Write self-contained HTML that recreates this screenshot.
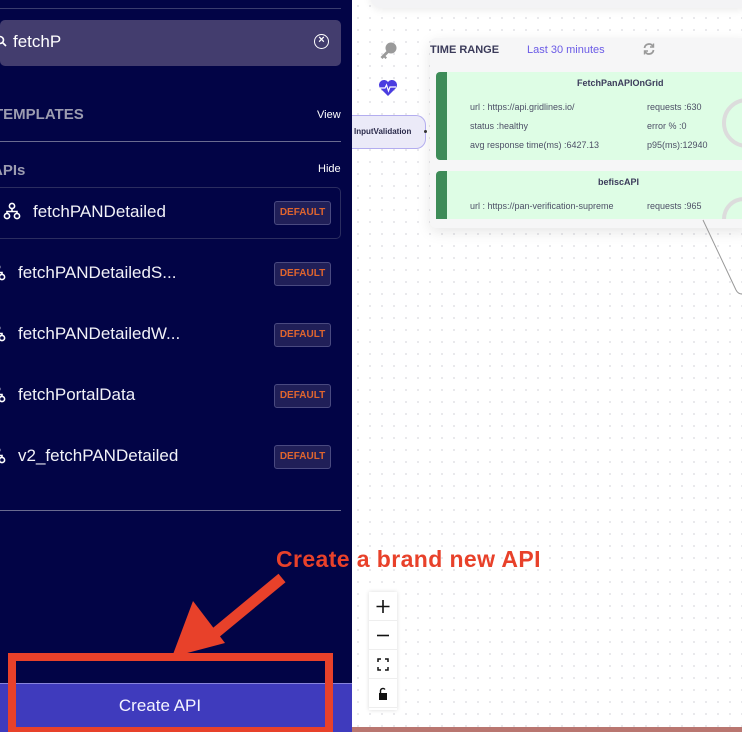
<!DOCTYPE html>
<html><head><style>
*{margin:0;padding:0;box-sizing:border-box}
body{width:742px;height:732px;overflow:hidden;position:relative;font-family:"Liberation Sans",sans-serif;background:#fff}
.sb{position:absolute;left:0;top:0;width:352px;height:732px;background:#020446;color:#fff}
.abs{position:absolute}
.canvas{position:absolute;left:352px;top:0;width:390px;height:732px;background-color:#fff;background-image:radial-gradient(#d6d6dc 0.7px,transparent 0.9px);background-size:12px 12px}
.badge{position:absolute;left:274px;width:57px;height:24px;border:1px solid #4a4a80;background:#201f58;border-radius:3px;color:#e0652e;font-size:10px;font-weight:bold;text-align:center;line-height:22px}
.item{position:absolute;font-size:17px;color:#f2f2f8}
.row{position:absolute;font-size:9px;color:#4d4f66}
.zb{position:absolute;left:369px;width:28px;height:29px;background:#fff;border-bottom:1px solid #eee}
</style></head><body>
<div class="canvas"></div>
<div class="abs" style="left:370px;top:-20px;width:380px;height:28px;background:#f3f3f5;border-radius:12px;box-shadow:0 2px 8px rgba(0,0,0,.08)"></div>
<svg class="abs" style="left:378px;top:41px" width="20" height="20" viewBox="0 0 20 20"><circle cx="13" cy="7" r="5.5" fill="#9a9a9a"/><path d="M9.5 9 L2.5 16 L4.5 18 L6 16.5 L7.5 18 L9 16.5 L7.5 15 L11.5 11Z" fill="#9a9a9a"/></svg>
<svg class="abs" style="left:378px;top:79px" width="20" height="18" viewBox="0 0 20 18"><path d="M10 17 L2 9 A4.5 4.5 0 0 1 10 3 A4.5 4.5 0 0 1 18 9Z" fill="#4b3de0"/><path d="M2 9 H7 L8.5 6 L10.5 12 L12 8 H18" stroke="#fff" stroke-width="1.2" fill="none"/></svg>
<div class="abs" style="left:430px;top:38px;width:320px;height:190px;background:#f6f6f7;box-shadow:0 4px 14px rgba(0,0,0,.1);border-radius:6px"></div>
<div class="abs" style="left:430px;top:44px;font-size:11px;font-weight:bold;color:#3b3b5a">TIME RANGE</div>
<div class="abs" style="left:527px;top:44px;font-size:11px;color:#6a5ae6">Last 30 minutes</div>
<svg class="abs" style="left:642px;top:42px" width="14" height="14" viewBox="0 0 14 14" fill="none" stroke="#9a9a9a" stroke-width="1.8"><path d="M2.5 6 A4.5 4.5 0 0 1 11 4.5 M11.5 8 A4.5 4.5 0 0 1 3 9.5"/><path d="M11.5 1.5 V5 H8 M2.5 12.5 V9 H6" stroke-width="1.4"/></svg>
<div class="abs" style="left:436px;top:72px;width:310px;height:88px;background:#defde5;border-left:11px solid #3d8c58;border-radius:4px 0 0 4px"></div>
<div class="abs" style="left:577px;top:78px;font-size:9px;font-weight:bold;color:#3b3b5a">FetchPanAPIOnGrid</div>
<div class="row" style="left:470px;top:102px">url : https://api.gridlines.io/</div>
<div class="row" style="left:470px;top:121px">status :healthy</div>
<div class="row" style="left:470px;top:140px">avg response time(ms) :6427.13</div>
<div class="row" style="left:647px;top:102px">requests :630</div>
<div class="row" style="left:647px;top:121px">error % :0</div>
<div class="row" style="left:647px;top:140px">p95(ms):12940</div>
<div class="abs" style="left:722px;top:98px;width:50px;height:50px;border:4px solid #dcdcdc;border-radius:50%"></div>
<div class="abs" style="left:436px;top:171px;width:310px;height:48px;background:#defde5;border-left:11px solid #3d8c58;border-radius:4px 0 0 0"></div>
<div class="abs" style="left:598px;top:177px;font-size:9px;font-weight:bold;color:#3b3b5a">befiscAPI</div>
<div class="row" style="left:470px;top:201px;width:160px;overflow:hidden;white-space:nowrap">url : https://pan-verification-supreme</div>
<div class="row" style="left:647px;top:201px">requests :965</div>
<div class="abs" style="left:722px;top:197px;width:50px;height:22px;border:4px solid #dcdcdc;border-bottom:none;border-radius:25px 25px 0 0"></div>
<svg class="abs" style="left:700px;top:218px" width="42" height="80"><path d="M3 2 L36 72 Q38 76 42 76" stroke="#999" fill="none"/></svg>
<div class="abs" style="left:352px;top:115px;width:74px;height:34px;background:#ebeaf8;border:1px solid #b3adef;border-left:none;border-radius:0 10px 10px 0;font-size:8px;font-weight:bold;color:#2a2a4a;line-height:32px;padding-left:2px">InputValidation</div>
<div class="abs" style="left:424px;top:130px;width:3px;height:3px;background:#333;border-radius:50%"></div>
<div class="abs" style="left:369px;top:592px;width:28px;height:118px;box-shadow:0 0 4px rgba(0,0,0,.15)"></div>
<div class="zb" style="top:592px"><svg width="28" height="29"><path d="M14 8 V21 M7.5 14.5 H20.5" stroke="#111" stroke-width="1.6"/></svg></div>
<div class="zb" style="top:621px"><svg width="28" height="29"><path d="M8 14.5 H20" stroke="#111" stroke-width="1.6"/></svg></div>
<div class="zb" style="top:650px"><svg width="28" height="29" fill="none" stroke="#111" stroke-width="1.5"><path d="M9 12 V9 H12 M16 9 H19 V12 M19 17 V20 H16 M12 20 H9 V17"/></svg></div>
<div class="zb" style="top:679px"><svg width="28" height="29"><rect x="10" y="14" width="8" height="7" fill="#111"/><path d="M11.5 14 V11.5 A2.5 2.5 0 0 1 16 10.5" stroke="#111" stroke-width="1.4" fill="none"/></svg></div>

<div class="sb">
<div class="abs" style="left:0;top:8px;width:341px;height:1px;background:#3a3c6e"></div>
<div class="abs" style="left:0;top:20px;width:341px;height:46px;background:#433d6e;border-radius:5px"></div>
<svg class="abs" style="left:-4px;top:35px" width="12" height="14" fill="none" stroke="#fff" stroke-width="1.6"><circle cx="4" cy="5" r="3.5"/><path d="M6.5 7.5 L10 11"/></svg>
<div class="abs" style="left:13px;top:32px;font-size:17px">fetchP</div>
<div class="abs" style="left:314px;top:34px;width:15px;height:15px;border:1.5px solid #fff;border-radius:50%;font-size:11px;font-weight:bold;text-align:center;line-height:11px">×</div>
<div class="abs" style="left:-6px;top:106px;font-size:15px;font-weight:bold;color:#9c9cb0">TEMPLATES</div>
<div class="abs" style="left:317px;top:109px;font-size:11px">View</div>
<div class="abs" style="left:0;top:141px;width:341px;height:1px;background:#6a6b90"></div>
<div class="abs" style="left:-8px;top:162px;font-size:15px;font-weight:bold;color:#9c9cb0">APIs</div>
<div class="abs" style="left:318px;top:163px;font-size:11px">Hide</div>
<div class="abs" style="left:-5px;top:187px;width:346px;height:52px;border:1px solid #2b2d60;border-radius:5px"></div>
<svg class="abs" style="left:3px;top:202px" width="18" height="18" viewBox="0 0 18 18" fill="none" stroke="#fff" stroke-width="1.6"><circle cx="9" cy="4" r="2.6"/><circle cx="4" cy="14" r="2.6"/><circle cx="14" cy="14" r="2.6"/><path d="M9 6.6 V9 M4 11.4 V9.5 H14 V11.4"/></svg>
<div class="item" style="left:33px;top:202px">fetchPANDetailed</div>
<div class="badge" style="top:201px">DEFAULT</div>
<svg class="abs" style="left:-12px;top:263px" width="18" height="18" viewBox="0 0 18 18" fill="none" stroke="#fff" stroke-width="1.6"><circle cx="9" cy="4" r="2.6"/><circle cx="4" cy="14" r="2.6"/><circle cx="14" cy="14" r="2.6"/><path d="M9 6.6 V9 M4 11.4 V9.5 H14 V11.4"/></svg>
<div class="item" style="left:18px;top:263px">fetchPANDetailedS...</div>
<div class="badge" style="top:262px">DEFAULT</div>
<svg class="abs" style="left:-12px;top:324px" width="18" height="18" viewBox="0 0 18 18" fill="none" stroke="#fff" stroke-width="1.6"><circle cx="9" cy="4" r="2.6"/><circle cx="4" cy="14" r="2.6"/><circle cx="14" cy="14" r="2.6"/><path d="M9 6.6 V9 M4 11.4 V9.5 H14 V11.4"/></svg>
<div class="item" style="left:18px;top:324px">fetchPANDetailedW...</div>
<div class="badge" style="top:323px">DEFAULT</div>
<svg class="abs" style="left:-12px;top:385px" width="18" height="18" viewBox="0 0 18 18" fill="none" stroke="#fff" stroke-width="1.6"><circle cx="9" cy="4" r="2.6"/><circle cx="4" cy="14" r="2.6"/><circle cx="14" cy="14" r="2.6"/><path d="M9 6.6 V9 M4 11.4 V9.5 H14 V11.4"/></svg>
<div class="item" style="left:18px;top:385px">fetchPortalData</div>
<div class="badge" style="top:384px">DEFAULT</div>
<svg class="abs" style="left:-12px;top:446px" width="18" height="18" viewBox="0 0 18 18" fill="none" stroke="#fff" stroke-width="1.6"><circle cx="9" cy="4" r="2.6"/><circle cx="4" cy="14" r="2.6"/><circle cx="14" cy="14" r="2.6"/><path d="M9 6.6 V9 M4 11.4 V9.5 H14 V11.4"/></svg>
<div class="item" style="left:18px;top:446px">v2_fetchPANDetailed</div>
<div class="badge" style="top:445px">DEFAULT</div>
<div class="abs" style="left:0;top:510px;width:341px;height:1px;background:#6a6b90"></div>
<div class="abs" style="left:0;top:683px;width:352px;height:49px;background:#3f3bbd;border-top:1px solid #8884dd"></div>
<div class="abs" style="left:0;top:684px;width:320px;text-align:center;font-size:17px;line-height:44px;color:#f4f4ff">Create API</div>
</div>
<div class="abs" style="left:352px;top:727px;width:390px;height:5px;background:#b97670"></div>
<div class="abs" style="left:8px;top:653px;width:325px;height:79px;border:8px solid #e8412a;border-bottom-width:5px"></div>
<svg class="abs" style="left:0;top:0" width="742" height="732"><path d="M282 578 L207 640" stroke="#e8412a" stroke-width="11"/><path d="M172 657 L193 601 L225 643Z" fill="#e8412a"/></svg>
<div class="abs" style="left:276px;top:546px;font-size:23px;font-weight:bold;color:#e8412a;letter-spacing:0.4px">Create a brand new API</div>
</body></html>
